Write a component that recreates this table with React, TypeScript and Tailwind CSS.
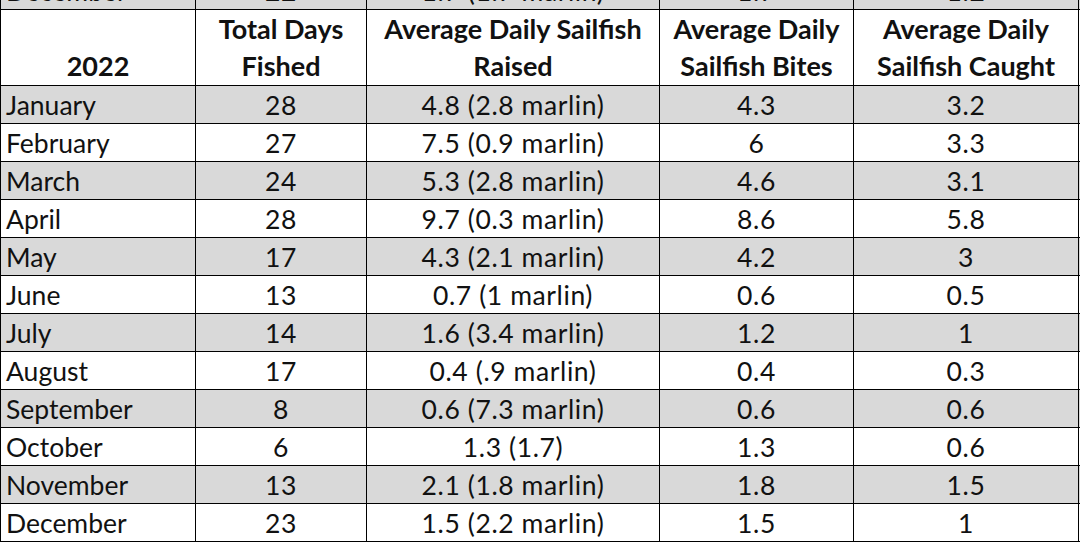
import React from "react";

const rows: [string, string, string, string, string][] = [
  ["January", "28", "4.8 (2.8 marlin)", "4.3", "3.2"],
  ["February", "27", "7.5 (0.9 marlin)", "6", "3.3"],
  ["March", "24", "5.3 (2.8 marlin)", "4.6", "3.1"],
  ["April", "28", "9.7 (0.3 marlin)", "8.6", "5.8"],
  ["May", "17", "4.3 (2.1 marlin)", "4.2", "3"],
  ["June", "13", "0.7 (1 marlin)", "0.6", "0.5"],
  ["July", "14", "1.6 (3.4 marlin)", "1.2", "1"],
  ["August", "17", "0.4 (.9 marlin)", "0.4", "0.3"],
  ["September", "8", "0.6 (7.3 marlin)", "0.6", "0.6"],
  ["October", "6", "1.3 (1.7)", "1.3", "0.6"],
  ["November", "13", "2.1 (1.8 marlin)", "1.8", "1.5"],
  ["December", "23", "1.5 (2.2 marlin)", "1.5", "1"],
];

function DataRow({ r, grey, extra = "" }: { r: string[]; grey: boolean; extra?: string }) {
  return (
    <div className={`flex h-[38px] shrink-0 border-b border-black leading-[30px] ${grey ? "bg-[#d9d9d9]" : "bg-white"} ${extra}`}>
      <div className="w-[196px] shrink-0 border-l border-r border-black pl-[5px] flex items-center pt-[1px]">{r[0]}</div>
      <div className="w-[171px] shrink-0 border-r border-black flex items-center justify-center pt-[1px] tracking-[0.6px]">{r[1]}</div>
      <div className="w-[293px] shrink-0 border-r border-black flex items-center justify-center pt-[1px] tracking-[0.6px]">{r[2]}</div>
      <div className="w-[194px] shrink-0 border-r border-black flex items-center justify-center pt-[1px] tracking-[0.6px]">{r[3]}</div>
      <div className="w-[225px] shrink-0 border-r border-black flex items-center justify-center pt-[1px] tracking-[0.6px]">{r[4]}</div>
    </div>
  );
}

export default function App() {
  return (
    <div
      className="w-[1080px] h-[542px] overflow-hidden bg-white text-[26.5px] text-[#111]"
      style={{ fontFamily: "Lato, 'Open Sans', sans-serif" }}
    >
      <div className="flex flex-col">
        <DataRow r={["December", "22", "1.7 (1.7 marlin)", "1.7", "1.2"]} grey={true} extra="mt-[-28px]" />
        <div className="flex h-[76px] shrink-0 border-b border-black bg-white font-bold text-[27px] leading-[37px]">
          <div className="w-[196px] shrink-0 border-l border-r border-black flex items-end justify-center pb-[1px]">2022</div>
          <div className="w-[171px] shrink-0 border-r border-black flex items-end justify-center text-center pb-[1px]">
            <span>Total Days<br />Fished</span>
          </div>
          <div className="w-[293px] shrink-0 border-r border-black flex items-end justify-center text-center pb-[1px]">
            <span>Average Daily Sailfish<br />Raised</span>
          </div>
          <div className="w-[194px] shrink-0 border-r border-black flex items-end justify-center text-center pb-[1px]">
            <span>Average Daily<br />Sailfish Bites</span>
          </div>
          <div className="w-[225px] shrink-0 border-r border-black flex items-end justify-center text-center pb-[1px]">
            <span>Average Daily<br />Sailfish Caught</span>
          </div>
        </div>
        {rows.map((r, i) => (
          <DataRow key={r[0]} r={r} grey={i % 2 === 0} />
        ))}
      </div>
    </div>
  );
}
